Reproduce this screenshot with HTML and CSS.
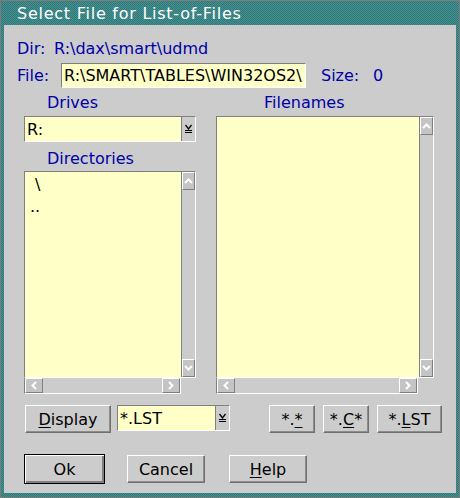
FILE: index.html
```html
<!DOCTYPE html>
<html>
<head>
<meta charset="utf-8">
<link rel="stylesheet" href="styles.css">
</head>
<body>
<div class="window">
  <div class="titlebar">Select File for List-of-Files</div>
  <div class="client">
    <div class="dir-row">
      <span class="lbl lbl-dir">Dir:</span>
      <span class="lbl">R:\dax\smart\udmd</span>
    </div>
    <div class="file-row">
      <span class="lbl lbl-file">File:</span>
      <div class="entry file-entry"><span class="entry-text">R:\SMART\TABLES\WIN32OS2\</span></div>
      <span class="lbl lbl-size">Size:</span>
      <span class="lbl">0</span>
    </div>
    <div class="columns">
      <div class="col-left">
        <div class="grp-label">Drives</div>
        <div class="combo drive-combo">
          <div class="combo-text">R:</div>
          <div class="combo-btn"><svg width="7" height="10" viewBox="0 0 7 10"><path d="M0.5 1 L3.5 5 L6.5 1" fill="none" stroke="#000" stroke-width="1.3"/><path d="M0 6.5 H7 M0 8.5 H7" stroke="#000" stroke-width="1"/></svg></div>
        </div>
        <div class="grp-label dirs-label">Directories</div>
        <div class="listbox dir-list">
          <div class="list-body">
            <div class="list-items">
              <div class="item item-root">\</div>
              <div class="item">..</div>
            </div>
            <div class="vscroll">
              <div class="sbtn sbtn-v"><svg width="9" height="6" viewBox="0 0 9 6"><path d="M1 5 L4.5 1.5 L8 5" fill="none" stroke="#fff" stroke-width="2"/></svg></div>
              <div class="sbtn sbtn-v"><svg width="9" height="6" viewBox="0 0 9 6"><path d="M1 1 L4.5 4.5 L8 1" fill="none" stroke="#fff" stroke-width="2"/></svg></div>
            </div>
          </div>
          <div class="hscroll">
            <div class="sbtn sbtn-h"><svg width="6" height="9" viewBox="0 0 6 9"><path d="M5 1 L1.5 4.5 L5 8" fill="none" stroke="#fff" stroke-width="2"/></svg></div>
            <div class="sbtn sbtn-h"><svg width="6" height="9" viewBox="0 0 6 9"><path d="M1 1 L4.5 4.5 L1 8" fill="none" stroke="#fff" stroke-width="2"/></svg></div>
          </div>
        </div>
      </div>
      <div class="col-right">
        <div class="grp-label files-label">Filenames</div>
        <div class="listbox file-list">
          <div class="list-body">
            <div class="list-items"></div>
            <div class="vscroll">
              <div class="sbtn sbtn-v"><svg width="9" height="6" viewBox="0 0 9 6"><path d="M1 5 L4.5 1.5 L8 5" fill="none" stroke="#fff" stroke-width="2"/></svg></div>
              <div class="sbtn sbtn-v"><svg width="9" height="6" viewBox="0 0 9 6"><path d="M1 1 L4.5 4.5 L8 1" fill="none" stroke="#fff" stroke-width="2"/></svg></div>
            </div>
          </div>
          <div class="hscroll">
            <div class="sbtn sbtn-h"><svg width="6" height="9" viewBox="0 0 6 9"><path d="M5 1 L1.5 4.5 L5 8" fill="none" stroke="#fff" stroke-width="2"/></svg></div>
            <div class="sbtn sbtn-h"><svg width="6" height="9" viewBox="0 0 6 9"><path d="M1 1 L4.5 4.5 L1 8" fill="none" stroke="#fff" stroke-width="2"/></svg></div>
          </div>
        </div>
      </div>
    </div>
    <div class="filter-row">
      <div class="btn btn-display"><u>D</u>isplay</div>
      <div class="combo mask-combo">
        <div class="combo-text">*.LST</div>
        <div class="combo-btn"><svg width="7" height="10" viewBox="0 0 7 10"><path d="M0.5 1 L3.5 5 L6.5 1" fill="none" stroke="#000" stroke-width="1.3"/><path d="M0 6.5 H7 M0 8.5 H7" stroke="#000" stroke-width="1"/></svg></div>
      </div>
      <div class="btn btn-all">*.<u>*</u></div>
      <div class="btn btn-c">*.<u>C</u>*</div>
      <div class="btn btn-lst">*.<u>L</u>ST</div>
    </div>
    <div class="action-row">
      <div class="btn btn-ok">Ok</div>
      <div class="btn btn-cancel">Cancel</div>
      <div class="btn btn-help"><u>H</u>elp</div>
    </div>
  </div>
</div>
</body>
</html>
```
FILE: styles.css
```css
html, body {
  margin: 0;
  padding: 0;
  background: #cccccc;
}
body {
  font-family: "DejaVu Sans", "Liberation Sans", sans-serif;
  font-size: 16px;
}
.window {
  width: 460px;
  height: 498px;
  box-sizing: border-box;
  border: 1px solid #7c7c7c;
  background: repeating-conic-gradient(#4f8c8a 0 25%, #267d80 0 50%) 0 0 / 2px 2px;
  padding: 0 3px 4px 3px;
  display: flex;
  flex-direction: column;
}
.titlebar {
  height: 24px;
  line-height: 24px;
  box-sizing: border-box;
  padding: 1px 0 0 13px;
  color: #ffffff;
  font-size: 16px;
  letter-spacing: 0.75px;
  white-space: nowrap;
  overflow: hidden;
}
.client {
  flex: 1;
  background: #cccccc;
  overflow: hidden;
}
.lbl {
  color: #0000a8;
  white-space: nowrap;
}
.dir-row {
  margin-top: 14px;
  height: 19px;
  line-height: 19px;
  padding-left: 13px;
  display: flex;
}
.lbl-dir { width: 37px; }
.file-row {
  margin-top: 5px;
  height: 25px;
  display: flex;
  align-items: center;
  padding-left: 13px;
}
.lbl-file { width: 44px; }
.entry {
  box-sizing: border-box;
  height: 25px;
  border: 1px solid;
  border-color: #808080 #ffffff #ffffff #808080;
  background: #ffffc8;
  overflow: hidden;
  white-space: nowrap;
  display: flex;
  align-items: center;
}
.file-entry { width: 245px; }
.entry-text {
  color: #000;
  padding-left: 2px;
}
.lbl-size {
  margin-left: 15px;
  width: 52px;
}
.columns {
  margin-top: 5px;
  padding-left: 20px;
  display: flex;
  gap: 19px;
}
.col-left { width: 173px; }
.col-right { width: 218px; }
.grp-label {
  color: #0000a8;
  height: 19px;
  line-height: 19px;
  padding-left: 23px;
}
.files-label { padding-left: 48px; }
.combo {
  box-sizing: border-box;
  border: 1px solid;
  border-color: #808080 #ffffff #ffffff #808080;
  display: flex;
  background: #ffffc8;
}
.drive-combo {
  margin-top: 4px;
  width: 172px;
  height: 26px;
}
.combo-text {
  flex: 1;
  padding-left: 2px;
  display: flex;
  align-items: center;
  color: #000;
}
.combo-btn {
  width: 13px;
  background: #cccccc;
  border-left: 1px solid #808080;
  display: flex;
  align-items: center;
  justify-content: center;
}
.dirs-label { margin-top: 7px; }
.dir-list { margin-top: 3px; }
.file-list { margin-top: 4px; }
.listbox {
  display: flex;
  flex-direction: column;
}
.list-body {
  box-sizing: border-box;
  border: 1px solid;
  border-color: #808080 #ffffff #ffffff #808080;
  display: flex;
}
.dir-list .list-body { width: 172px; height: 207px; }
.file-list .list-body { width: 218px; height: 262px; }
.list-items {
  flex: 1;
  background: #ffffc8;
  color: #000;
  padding-top: 2px;
}
.item {
  height: 22px;
  line-height: 22px;
  padding-left: 5px;
}
.item-root { padding-left: 10px; }
.vscroll {
  width: 13px;
  background: #cccccc;
  border-left: 1px solid #808080;
  display: flex;
  flex-direction: column;
  justify-content: space-between;
}
.sbtn {
  box-sizing: border-box;
  background: #c4c4c4;
  border: 1px solid;
  border-color: #ffffff #808080 #808080 #ffffff;
  display: flex;
  align-items: center;
  justify-content: center;
}
.sbtn-v { height: 18px; }
.hscroll {
  box-sizing: border-box;
  height: 16px;
  background: #cccccc;
  border-left: 1px solid #808080;
  border-right: 1px solid #ffffff;
  border-bottom: 1px solid #ffffff;
  display: flex;
  justify-content: space-between;
}
.dir-list .hscroll { width: 157px; }
.file-list .hscroll { width: 202px; }
.sbtn-h { width: 18px; }
.filter-row {
  margin-top: 11px;
  padding-left: 21px;
  display: flex;
  align-items: flex-start;
}
.btn {
  box-sizing: border-box;
  height: 28px;
  border: 1px solid;
  border-color: #ffffff #707070 #707070 #ffffff;
  box-shadow: inset -1px -1px 0 #8c8c8c;
  background: #cccccc;
  color: #000;
  display: flex;
  align-items: center;
  justify-content: center;
  white-space: nowrap;
}
.btn u { text-underline-offset: 2px; }
.btn-display { width: 86px; }
.mask-combo {
  margin-left: 6px;
  width: 113px;
  height: 26px;
}
.btn-all { margin-left: 39px; width: 46px; }
.btn-c { margin-left: 8px; width: 46px; }
.btn-lst { margin-left: 8px; width: 65px; }
.action-row {
  margin-top: 21px;
  padding-left: 20px;
  display: flex;
  align-items: center;
}
.btn-ok {
  width: 81px;
  height: 30px;
  border: 1px solid #000;
  box-shadow: inset 1px 1px 0 #ffffff, inset -2px -2px 0 #808080;
}
.btn-cancel { margin-left: 22px; width: 78px; }
.btn-help { margin-left: 24px; width: 78px; }
```
